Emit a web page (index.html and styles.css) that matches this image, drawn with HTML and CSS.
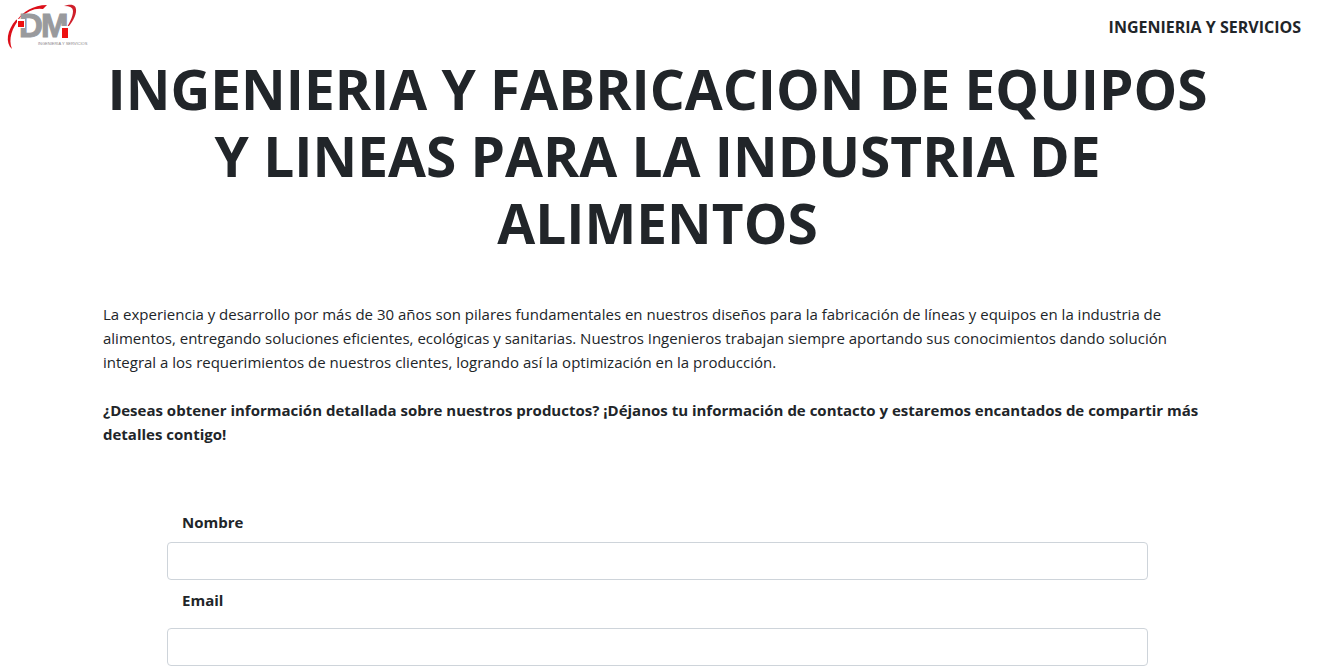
FILE: index.html
```
<!DOCTYPE html>
<html lang="es">
<head>
<meta charset="utf-8">
<meta name="viewport" content="width=device-width, initial-scale=1">
<title>DM Ingenieria y Servicios</title>
<link rel="stylesheet" href="styles.css">
</head>
<body>
<header class="topbar">
  <a class="logo-link" href="#" aria-label="DM Ingenieria y Servicios">
    <svg class="logo" viewBox="0 0 84 48" width="84" height="48">
      <path d="M6 46 C-1 40 1 27 10 17 L14 15 C6 25 2 36 6 46Z" fill="#dc0f19"/>
      <path d="M11 17 C17 9 27 2 41 2 L37 6 Q30 5 24 8 Q16 12 11 17Z" fill="#dc0f19"/>
      <path d="M58 3 C66 0 71 2 70 9 C69 16 64 22 58 29 C63 21 67 14 67 8 Q67 3 58 3Z" fill="#cf1f2a"/>
      <text class="logo-letters" x="13" y="34">D</text>
      <text class="logo-letters" x="35" y="34">M</text>
      <path d="M11 16h8v9h-8z" fill="#fff"/>
      <path d="M12 18h6v6h-6z" fill="#ed1111"/>
      <path d="M55 23h8v13h-8z" fill="#fff"/>
      <path d="M56 25h6v10h-6z" fill="#ed1111"/>
      <text class="logo-caption" x="32" y="42">INGENIERIA Y SERVICIOS</text>
    </svg>
  </a>
  <strong class="brand">INGENIERIA Y SERVICIOS</strong>
</header>
<main class="content">
  <h1 class="title">INGENIERIA Y FABRICACION DE EQUIPOS Y LINEAS PARA LA INDUSTRIA DE ALIMENTOS</h1>
  <p class="text">La experiencia y desarrollo por más de 30 años son pilares fundamentales en nuestros diseños para la fabricación de líneas y equipos en la industria de alimentos, entregando soluciones eficientes, ecológicas y sanitarias. Nuestros Ingenieros trabajan siempre aportando sus conocimientos dando solución integral a los requerimientos de nuestros clientes, logrando así la optimización en la producción.</p>
  <p class="text lead">¿Deseas obtener información detallada sobre nuestros productos? ¡Déjanos tu información de contacto y estaremos encantados de compartir más detalles contigo!</p>
  <form class="form">
    <label class="label" for="nombre">Nombre</label>
    <input class="field" id="nombre" name="nombre" type="text">
    <label class="label label-email" for="email">Email</label>
    <input class="field" id="email" name="email" type="email">
  </form>
</main>
</body>
</html>
```
FILE: styles.css
```
* { box-sizing: border-box; }
body {
  margin: 0;
  padding-right: 4px;
  background: #fff;
  color: #212529;
  font: 15px/24px "Segoe UI", "Open Sans", sans-serif;
}
.topbar {
  display: flex;
  align-items: center;
  justify-content: space-between;
  padding: 3px 14px 4px 6px;
}
.logo-link, .logo { display: block; }
.logo { overflow: visible; }
.logo-letters {
  font: bold 33px "Liberation Sans", sans-serif;
  fill: #999a9d;
  stroke: #999a9d;
  stroke-width: 1px;
}
.logo-caption { font: 4px "Liberation Sans", sans-serif; fill: #8b8588; }
.brand { font-size: 16px; font-weight: 700; }
.content {
  max-width: 1141px;
  margin: 0 auto;
  padding: 0 16px 6px;
}
.title {
  margin: 0 0 46px;
  font-size: 55px;
  line-height: 67px;
  font-weight: 700;
  text-align: center;
}
.text { margin: 0 0 24px; }
.lead { font-weight: 700; }
.form {
  display: flex;
  flex-direction: column;
  margin: 64px 64px 0;
}
.label { padding: 0 15px; margin-bottom: 8px; font-weight: 700; }
.label-email { margin: 8px 0 16px; }
.field {
  width: 100%;
  height: 38px;
  padding: 6px 12px;
  border: 1px solid #ced4da;
  border-radius: 4px;
  background: #fff;
  color: inherit;
  font: inherit;
}
```
